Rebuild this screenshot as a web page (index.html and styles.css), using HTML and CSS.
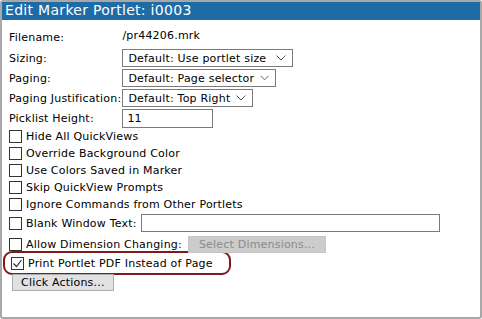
FILE: index.html
```html
<!DOCTYPE html>
<html lang="en-US">
  <head>
    <link rel="stylesheet" href="styles.css">
  </head>
  <body>
    <div class="window">
      <div class="title">Edit Marker Portlet: i0003</div>
      <div class="content">
        <div class="fields">
          <span class="label">Filename:</span>
          <span class="value">/pr44206.mrk</span>

          <span class="label">Sizing:</span>
          <div class="select sizing">Default: Use portlet size
            <svg class="chev" width="10" height="6" viewBox="0 0 10 6"><path d="M0.5 0.5 L5 5 L9.5 0.5" fill="none" stroke="#555" stroke-width="1"/></svg>
          </div>

          <span class="label">Paging:</span>
          <div class="select paging">Default: Page selector
            <svg class="chev" width="10" height="6" viewBox="0 0 10 6"><path d="M0.5 0.5 L5 5 L9.5 0.5" fill="none" stroke="#555" stroke-width="1"/></svg>
          </div>

          <span class="label">Paging Justification:</span>
          <div class="select justify">Default: Top Right
            <svg class="chev" width="10" height="6" viewBox="0 0 10 6"><path d="M0.5 0.5 L5 5 L9.5 0.5" fill="none" stroke="#555" stroke-width="1"/></svg>
          </div>

          <span class="label">Picklist Height:</span>
          <div class="textbox picklist">11</div>
        </div>

        <div class="checks">
          <div class="check"><span class="box"></span>Hide All QuickViews</div>
          <div class="check"><span class="box"></span>Override Background Color</div>
          <div class="check"><span class="box"></span>Use Colors Saved in Marker</div>
          <div class="check"><span class="box"></span>Skip QuickView Prompts</div>
          <div class="check"><span class="box"></span>Ignore Commands from Other Portlets</div>
          <div class="check blank"><span class="box"></span>Blank Window Text:<div class="textbox blanktext"></div></div>
          <div class="check allow"><span class="box"></span>Allow Dimension Changing:<span class="btn disabled">Select Dimensions...</span></div>
          <div class="check print">
            <span class="box">
              <svg width="11" height="11" viewBox="0 0 11 11"><path d="M1.5 5.5 L4.5 8.5 L9.5 2" fill="none" stroke="#333" stroke-width="1.2"/></svg>
            </span>Print Portlet PDF Instead of Page
          </div>
        </div>

        <span class="btn actions">Click Actions...</span>
      </div>
    </div>
  </body>
</html>
```

FILE: styles.css
```css
body {
  margin: 0;
  font-family: "DejaVu Sans", Verdana, sans-serif;
  font-size: 11px;
  letter-spacing: 0.2px;
  color: #000;
}

.window {
  width: 478px;
  height: 315px;
  border: 2px solid #a8a8a8;
  border-radius: 3px;
  background: #fff;
}

.title {
  height: 18px;
  line-height: 17px;
  padding-left: 3px;
  background: #1e6ba6;
  color: #fff;
  font-size: 14px;
  letter-spacing: 0.3px;
}

.content {
  padding: 7px 0 0 7px;
}

.fields {
  display: grid;
  grid-template-columns: auto 1fr;
  column-gap: 1px;
  row-gap: 2px;
  align-items: center;
}

.value {
  height: 20px;
  line-height: 18px;
}

.select {
  display: flex;
  align-items: center;
  justify-content: space-between;
  height: 16px;
  padding: 0 6px 0 5px;
  border: 1px solid #7a7a7a;
  white-space: nowrap;
}

.sizing {
  width: 158px;
}

.paging {
  width: 141px;
}

.justify {
  width: 118px;
}

.chev {
  margin-left: 6px;
}

.textbox {
  height: 17px;
  line-height: 17px;
  padding-left: 4px;
  border: 1px solid #7a7a7a;
}

.picklist {
  width: 85px;
}

.check {
  display: flex;
  align-items: center;
  height: 17px;
  white-space: nowrap;
}

.box {
  display: flex;
  align-items: center;
  justify-content: center;
  width: 11px;
  height: 11px;
  margin: 0 4px 0 0;
  border: 1px solid #333;
  background: #fff;
}

.blank {
  height: 20px;
}

.blanktext {
  width: 293px;
  height: 16px;
  margin-left: 4px;
}

.allow {
  height: 19px;
  margin-top: 2px;
}

.btn {
  display: inline-block;
  height: 15px;
  line-height: 15px;
  padding: 0 7px;
  border: 1px solid #adadad;
  white-space: nowrap;
}

.disabled {
  margin-left: 6px;
  padding: 0 10px;
  background: #cccccc;
  border-color: #c4c4c4;
  color: #8a8a8a;
}

.print {
  height: 20px;
  margin: -3px 0 0 -6px;
  padding-left: 6px;
  width: 218px;
  border: 2px solid #7d1a1a;
  border-radius: 9px;
}

.actions {
  margin: -1px 0 0 3px;
  background: #e1e1e1;
  padding: 0 8px;
}
```
